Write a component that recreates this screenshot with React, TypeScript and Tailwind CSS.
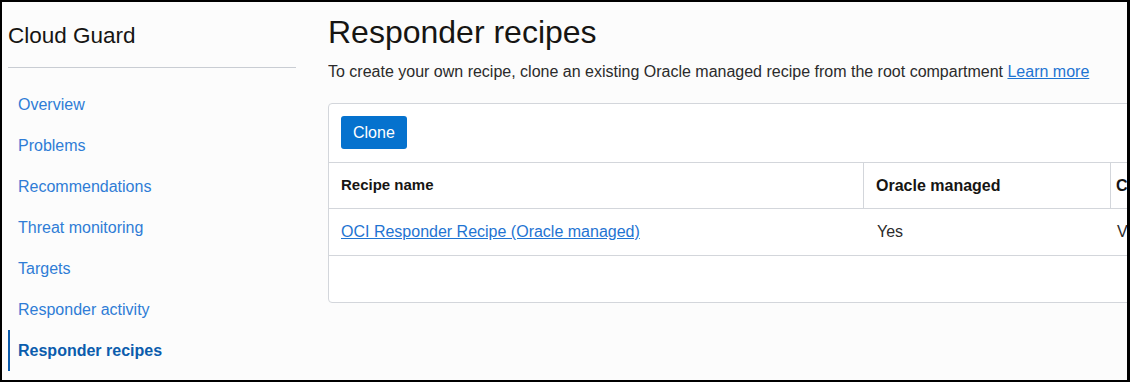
const navItems = [
  'Overview',
  'Problems',
  'Recommendations',
  'Threat monitoring',
  'Targets',
  'Responder activity',
  'Responder recipes',
];

export default function App() {
  const active = 'Responder recipes';

  return (
    <div className="w-[1130px] h-[382px] overflow-hidden border-t-2 border-l-2 border-b-2 border-r-[3px] border-black bg-[#fcfcfc] font-['Liberation_Sans',Arial,sans-serif] text-[#161513]">
      <div className="flex h-full">
        {/* sidebar */}
        <aside className="w-[294px] shrink-0 pl-[6px]">
          <h1 className="mt-[21px] text-[22.5px] leading-[26px] font-normal">Cloud Guard</h1>
          <div className="mt-[18px] h-px bg-[#c9cdd3]" />
          <nav className="mt-[16px] flex flex-col">
            {navItems.map(item => (
              <a
                key={item}
                href="#"
                className={
                  item === active
                    ? 'h-[41px] flex items-center border-l-2 border-[#0b5cad] pl-[8px] text-[16px] font-bold text-[#0b5cad]'
                    : 'h-[41px] flex items-center border-l-2 border-transparent pl-[8px] text-[16px] text-[#2f7cd6]'
                }
              >
                {item}
              </a>
            ))}
          </nav>
        </aside>

        {/* main */}
        <main className="ml-[32px] flex-1 min-w-0 overflow-hidden">
          <h2 className="mt-[12px] text-[32px] leading-[36px] font-normal">Responder recipes</h2>
          <p className="mt-[12px] text-[16px] leading-[20px] text-[#2b2b2b]">
            To create your own recipe, clone an existing Oracle managed recipe from the root compartment{' '}
            <a href="#" className="underline text-[#1f74d2]">Learn more</a>
          </p>

          <div className="mt-[21px] w-[1000px] bg-white border border-[#d3d6db] rounded-[4px]">
            <div className="px-3 pt-3 pb-[13px]">
              <button className="h-[33px] px-3 rounded-[3px] bg-[#0572ce] text-white text-[16px]">Clone</button>
            </div>
            <div className="flex h-[46px] border-t border-[#d3d6db] font-bold">
              <div className="w-[535px] px-3 flex items-center border-r border-[#d3d6db] text-[15px]">Recipe name</div>
              <div className="w-[247px] px-3 flex items-center border-r border-[#d3d6db] text-[16px]">Oracle managed</div>
              <div className="flex-1 px-[5px] flex items-center text-[16px]">Compartment</div>
            </div>
            <div className="flex h-[47px] border-t border-[#d3d6db] text-[16px]">
              <div className="w-[536px] px-3 flex items-center">
                <a href="#" className="underline text-[#1f74d2]">OCI Responder Recipe (Oracle managed)</a>
              </div>
              <div className="w-[248px] px-3 flex items-center text-[#2b2b2b]">Yes</div>
              <div className="flex-1 px-[4px] flex items-center text-[#2b2b2b]">Vcn-root</div>
            </div>
            <div className="h-[47px] border-t border-[#d3d6db]" />
          </div>
        </main>
      </div>
    </div>
  );
}
